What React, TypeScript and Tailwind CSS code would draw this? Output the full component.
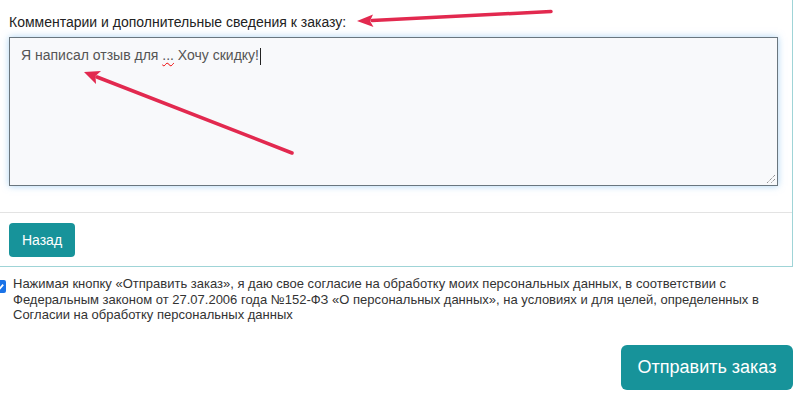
import React from "react";

export default function App() {
  const font = { fontFamily: '"Liberation Sans", Arial, sans-serif' };
  return (
    <div className="relative w-[795px] h-[398px] bg-white overflow-hidden" style={font}>
      <div className="w-[793px] border-r border-b border-[#9fd4d7]">
        <div className="pl-[9px] pr-[14px] pt-[12px]">
          <div className="text-[14px] leading-[20px] text-[#222]">
            Комментарии и дополнительные сведения к заказу:
          </div>
          <div className="relative mt-[5px] h-[149px] border border-[#6a767e] bg-[#f8f9fb] shadow-[0_0_7px_rgba(102,175,233,0.55)] px-[11px] pt-[7px]">
            <div className="text-[14px] leading-[20px] text-[#555]">
              Я написал отзыв для{" "}
              <span className="underline decoration-wavy decoration-[#e00] decoration-1 underline-offset-2">...</span>{" "}
              Хочу скидку!
              <span className="inline-block w-px h-[17px] bg-[#222] align-middle ml-px"></span>
            </div>
            <svg className="absolute right-[1px] bottom-[1px]" width="11" height="11" viewBox="0 0 11 11">
              <line x1="10" y1="2" x2="2" y2="10" stroke="#666" strokeWidth="1" strokeDasharray="1 1" />
              <line x1="10" y1="6" x2="6" y2="10" stroke="#666" strokeWidth="1" strokeDasharray="1 1" />
            </svg>
          </div>
        </div>
        <div className="mt-[26px] border-t border-[#e3e3e3] px-[9px] pt-[10px] pb-[9px]">
          <button className="h-[34px] w-[66px] rounded-[4px] bg-[#17939a] text-white text-[14px]">
            Назад
          </button>
        </div>
      </div>

      <div className="mt-[9px] flex items-start">
        <div className="-ml-[7px] mt-[4px] w-[13px] h-[13px] rounded-[2px] bg-[#1a73e8] flex items-center justify-center shrink-0">
          <svg width="10" height="10" viewBox="0 0 10 10">
            <path d="M2 5.2 L4.1 7.3 L8.2 2.6" fill="none" stroke="white" strokeWidth="1.8" />
          </svg>
        </div>
        <div className="ml-[7px] text-[13px] leading-[15.5px] text-[#333]">
          Нажимая кнопку «Отправить заказ», я даю свое согласие на обработку моих персональных данных, в соответствии с
          <br />
          Федеральным законом от 27.07.2006 года №152-ФЗ «О персональных данных», на условиях и для целей, определенных в
          <br />
          Согласии на обработку персональных данных
        </div>
      </div>

      <div className="mt-[22px] flex justify-end pr-[2px]">
        <button className="h-[45px] w-[172px] rounded-[6px] bg-[#17939a] text-white text-[18px]">
          Отправить заказ
        </button>
      </div>

      <svg className="absolute left-0 top-0 pointer-events-none" width="795" height="398">
        <path d="M551 11.5 L372 20.5" stroke="#e2294f" strokeWidth="3.5" strokeLinecap="round" />
        <path d="M357 21 L373 14.5 L370 21 L373.5 27 Z" fill="#e2294f" />
        <path d="M292 153 L97 77" stroke="#e2294f" strokeWidth="3.5" strokeLinecap="round" />
        <path d="M84 72 L101 71 L95.5 76 L96 84 Z" fill="#e2294f" />
      </svg>
    </div>
  );
}
